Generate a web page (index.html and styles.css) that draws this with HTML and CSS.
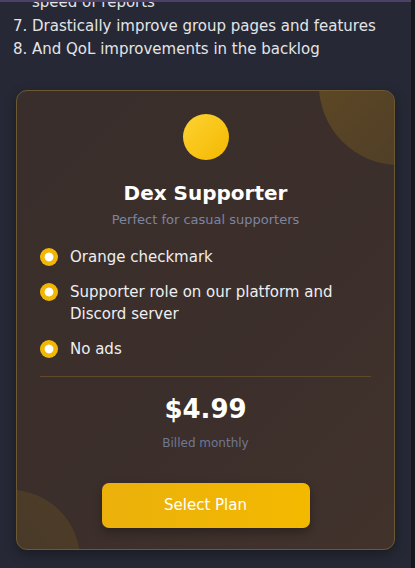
FILE: index.html
```html
<!DOCTYPE html>
<html>
<head>
    <meta charset="UTF-8">
    <title>Dex Supporter</title>
    <link rel="stylesheet" href="styles.css">
</head>
<body>
<div id="wrap">

    <div class="main">
        <div class="topline"></div>
        <div class="scroll">
            <ol class="roadmap" start="6">
                <li class="cont">speed of reports</li>
                <li>Drastically improve group pages and features</li>
                <li>And QoL improvements in the backlog</li>
            </ol>

            <div class="card">
                <div class="blob blobTop"></div>
                <div class="blob blobBottom"></div>

                <div class="coin"></div>
                <h2 class="title">Dex Supporter</h2>
                <p class="sub">Perfect for casual supporters</p>

                <ul class="perks">
                    <li><span class="dot"></span><span>Orange checkmark</span></li>
                    <li><span class="dot"></span><span>Supporter role on our platform and Discord server</span></li>
                    <li><span class="dot"></span><span>No ads</span></li>
                </ul>

                <div class="line"></div>

                <p class="price">$4.99</p>
                <p class="billed">Billed monthly</p>

                <div class="btn">Select Plan</div>
            </div>
        </div>
    </div>

    <div class="bar"></div>

</div>
</body>
</html>
```

FILE: styles.css
```css
body{font-family: "DejaVu Sans","Noto Sans",sans-serif;}
body,h2,p,ol,ul{margin:0;}
ol,ul{padding:0;}
ul,li{list-style:none;}

body{
    background-color: #262935;
    overflow: hidden;
}
#wrap{
    display: flex;
    width: 415px;
    height: 568px;
}
#wrap .main{
    flex: 1;
    display: flex;
    flex-direction: column;
}
#wrap .topline{
    height: 2px;
    background-color: #4d4265;
}
#wrap .scroll{
    flex: 1;
    overflow: hidden;
    padding: 0 16px;
}
#wrap .bar{
    width: 4px;
    background-color: #17181d;
}

/* roadmap list */
#wrap .roadmap{
    margin-top: -11px;
    padding-left: 16px;
    font-size: 15px;
    line-height: 23.5px;
    color: #e4e4e6;
}
#wrap .roadmap li{
    list-style: decimal;
}
#wrap .roadmap li.cont{
    list-style: none;
}

/* plan card */
#wrap .card{
    position: relative;
    overflow: hidden;
    margin-top: 28px;
    height: 460px;
    box-sizing: border-box;
    padding: 23px 23px 0;
    border: 1px solid #6c5831;
    border-radius: 11px;
    background: linear-gradient(135deg,#392e2b 0%,#3c2f2b 60%,#41322b 100%);
    box-shadow: 0 4px 12px rgba(0,0,0,.35);
    display: flex;
    flex-direction: column;
}
#wrap .blob{
    position: absolute;
    border-radius: 50%;
}
#wrap .blobTop{
    top: -86px;
    right: -85px;
    width: 160px;
    height: 160px;
    background: linear-gradient(135deg,rgba(240,183,5,.22),rgba(240,183,5,.08));
}
#wrap .blobBottom{
    top: 399px;
    left: -77px;
    width: 140px;
    height: 140px;
    background: linear-gradient(45deg,rgba(240,183,5,.04),rgba(240,183,5,.1));
}
#wrap .coin{
    align-self: center;
    width: 46px;
    height: 46px;
    border-radius: 50%;
    background: linear-gradient(135deg,#fdd332,#f4b800);
}
#wrap .title{
    margin-top: 18px;
    font-size: 20px;
    line-height: 30px;
    font-weight: bold;
    color: #fff;
    text-align: center;
}
#wrap .sub{
    margin-top: 2px;
    font-size: 13px;
    line-height: 20px;
    color: #7c85a0;
    text-align: center;
}
#wrap .perks{
    margin-top: 16px;
    display: flex;
    flex-direction: column;
    gap: 13px;
}
#wrap .perks li{
    display: flex;
    gap: 12px;
    font-size: 15px;
    line-height: 22px;
    color: #eeeef0;
}
#wrap .perks .dot{
    flex: none;
    width: 18px;
    height: 18px;
    margin-top: 2px;
    border-radius: 50%;
    background: radial-gradient(circle,#fff 0,#fff 4px,#f2b705 4.8px);
}
#wrap .line{
    margin-top: 16px;
    height: 1px;
    background-color: #5e4a2a;
}
#wrap .price{
    margin-top: 14px;
    font-size: 26px;
    line-height: 36px;
    font-weight: bold;
    color: #fff;
    text-align: center;
}
#wrap .billed{
    margin-top: 7px;
    font-size: 12px;
    line-height: 18px;
    color: #6f7893;
    text-align: center;
}
#wrap .btn{
    position: relative;
    align-self: center;
    margin-top: 31px;
    width: 208px;
    height: 45px;
    border-radius: 7px;
    background: linear-gradient(90deg,#ebb00b,#f3b900);
    box-shadow: 0 4px 10px rgba(0,0,0,.3);
    font-size: 15px;
    line-height: 45px;
    color: #fff;
    text-align: center;
    cursor: pointer;
}
```
